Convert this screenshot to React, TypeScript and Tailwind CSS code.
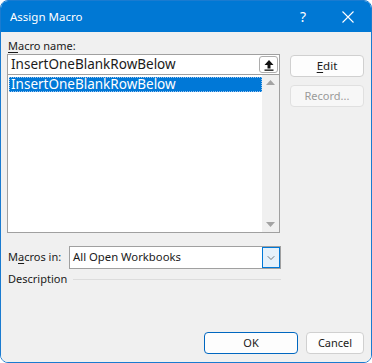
import { ChevronDown } from 'lucide-react';

const font = { fontFamily: '"Noto Sans", "Segoe UI", sans-serif' };

export default function App() {
  return (
    <div className="w-[372px] h-[363px] bg-white" style={font}>
      <div className="flex h-full flex-col overflow-hidden rounded-[8px] border border-[#1a7bd0]">
        {/* title bar */}
        <div className="flex h-[31px] shrink-0 items-center bg-[#0078d4] pl-[9px] text-white">
          <span className="text-[11.5px]">Assign Macro</span>
          <span className="ml-auto mr-[35px] text-[14px]">?</span>
          <svg width="14" height="14" viewBox="0 0 14 14" className="mr-[16px]">
            <path d="M1.5 1.5 L12.5 12.5 M12.5 1.5 L1.5 12.5" stroke="white" strokeWidth="1.1" />
          </svg>
        </div>

        <div className="flex flex-1 flex-col bg-[#f0f0f0] px-[6px] pt-[5px] text-[11px] text-[#1a1a1a]">
          <div className="flex gap-[10px]">
            <div className="flex w-[273px] flex-col">
              <div className="h-[17px] leading-[17px] pl-[1px]">
                <span className="underline underline-offset-2">M</span>acro name:
              </div>
              <div className="flex h-[21px] items-center border border-[#a0a0a0] bg-white pl-[3px] text-[13.5px]">
                <span>InsertOneBlankRowBelow</span>
                <div className="ml-auto mr-[1px] flex h-[17px] w-[19px] items-center justify-center rounded-[3px] border border-[#adadad] bg-white">
                  <svg width="10" height="12" viewBox="0 0 10 12">
                    <path d="M5 1 L9.5 6 L6.5 6 L6.5 9.5 L3.5 9.5 L3.5 6 L0.5 6 Z" fill="#111" />
                    <rect x="0.5" y="10.5" width="9" height="1.3" fill="#111" />
                  </svg>
                </div>
              </div>
              <div className="flex h-[158px] border border-t-0 border-[#a0a0a0] bg-white">
                <div className="flex-1 pt-[2px] pl-[1px]">
                  <div className="h-[15px] border border-dotted border-[#9cc4ef] bg-[#0078d7] pl-[1px] text-[13.5px] leading-[13px] text-white">
                    InsertOneBlankRowBelow
                  </div>
                </div>
                <div className="flex w-[17px] flex-col items-center justify-between bg-[#f0f0f0] py-[5px]">
                  <svg width="9" height="5" viewBox="0 0 9 5">
                    <path d="M0 5 L4.5 0 L9 5 Z" fill="#a3a3a3" />
                  </svg>
                  <svg width="9" height="5" viewBox="0 0 9 5">
                    <path d="M0 0 L4.5 5 L9 0 Z" fill="#a3a3a3" />
                  </svg>
                </div>
              </div>
            </div>

            <div className="flex w-[74px] flex-col gap-[8px] pt-[18px]">
              <div className="flex h-[22px] items-center justify-center rounded-[4px] border border-[#d0d0d0] bg-[#fdfdfd] text-[11.5px]">
                <span>
                  <span className="underline underline-offset-2">E</span>dit
                </span>
              </div>
              <div className="flex h-[22px] items-center justify-center rounded-[4px] border border-[#e0e0e0] bg-[#f7f7f7] text-[#9a9a9a]">
                Record...
              </div>
            </div>
          </div>

          <div className="mt-[13px] flex w-[274px] items-center">
            <span className="w-[62px] pl-[1px]">
              M<span className="underline underline-offset-2">a</span>cros in:
            </span>
            <div className="flex h-[23px] flex-1 items-center border border-[#a0a0a0] bg-white pl-[3px] text-[11.3px]">
              <span>All Open Workbooks</span>
              <div className="ml-auto flex h-[21px] w-[18px] items-center justify-center border border-[#0078d7] bg-[#e5f1fb]">
                <ChevronDown size={12} strokeWidth={1.3} color="#333" />
              </div>
            </div>
          </div>

          <div className="mt-[2px] flex w-[274px] items-center">
            <span className="pl-[1px]">Description</span>
            <div className="ml-[6px] h-px flex-1 bg-[#dcdcdc]" />
          </div>

          <div className="mt-auto mb-[8px] flex justify-end gap-[8px] pr-[1px]">
            <div className="flex h-[22px] w-[94px] items-center justify-center rounded-[4px] border border-[#0067c0] bg-[#fdfdfd]">
              OK
            </div>
            <div className="flex h-[22px] w-[58px] items-center justify-center rounded-[4px] border border-[#d0d0d0] bg-[#fdfdfd]">
              Cancel
            </div>
          </div>
        </div>
      </div>
    </div>
  );
}
